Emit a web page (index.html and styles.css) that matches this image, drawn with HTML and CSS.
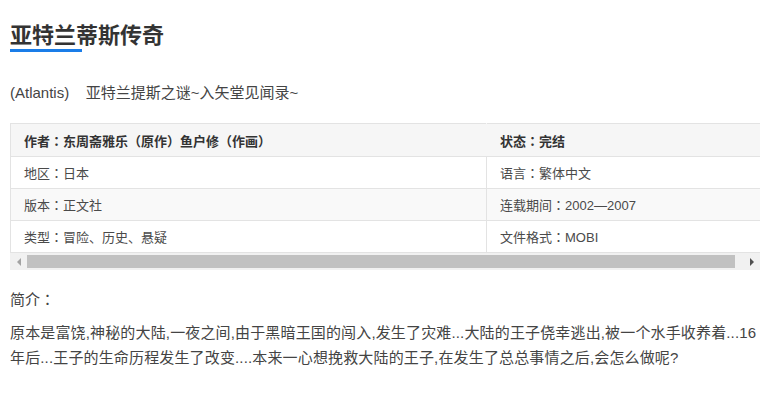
FILE: index.html
```html
<!DOCTYPE html>
<html lang="zh-CN">
<head>
<meta charset="utf-8">
<title>亚特兰蒂斯传奇</title>
<link rel="stylesheet" href="styles.css">
</head>
<body>
<main class="page">
  <h1 class="title">亚特兰蒂斯传奇</h1>
  <div class="title-bar"></div>
  <p class="subtitle">(Atlantis)&nbsp;&nbsp;&nbsp;&nbsp;亚特兰提斯之谜~入矢堂见闻录~</p>
  <div class="table-box">
    <div class="table-wrap">
      <table class="info">
        <tr class="head">
          <td class="c1">作者<span class="colon" lang="ja">：</span>东周斋雅乐（原作）鱼户修（作画）</td>
          <td class="c2">状态<span class="colon" lang="ja">：</span>完结</td>
        </tr>
        <tr>
          <td class="c1">地区<span class="colon" lang="ja">：</span>日本</td>
          <td class="c2">语言<span class="colon" lang="ja">：</span>繁体中文</td>
        </tr>
        <tr class="alt">
          <td class="c1">版本<span class="colon" lang="ja">：</span>正文社</td>
          <td class="c2">连载期间<span class="colon" lang="ja">：</span>2002—2007</td>
        </tr>
        <tr>
          <td class="c1">类型<span class="colon" lang="ja">：</span>冒险、历史、悬疑</td>
          <td class="c2">文件格式<span class="colon" lang="ja">：</span>MOBI</td>
        </tr>
      </table>
    </div>
    <div class="hscroll">
      <div class="sb-btn"><span class="arrow-left"></span></div>
      <div class="sb-track"><div class="sb-thumb"></div></div>
      <div class="sb-btn"><span class="arrow-right"></span></div>
    </div>
  </div>
  <p class="label">简介<span class="colon" lang="ja">：</span></p>
  <p class="desc">原本是富饶,神秘的大陆,一夜之间,由于黑暗王国的闯入,发生了灾难...大陆的王子侥幸逃出,被一个水手收养着...16年后...王子的生命历程发生了改变....本来一心想挽救大陆的王子,在发生了总总事情之后,会怎么做呢?</p>
</main>
</body>
</html>
```

FILE: styles.css
```css
html, body {
  margin: 0;
  padding: 0;
  background: #fff;
}
body {
  font-family: "Liberation Sans", "Noto Sans CJK SC", sans-serif;
  color: #333;
}
.page {
  width: 750px;
  padding-left: 10px;
}
.colon {
  font-family: "Noto Sans CJK JP", "Noto Sans CJK TC", sans-serif;
}
.title {
  margin: 0;
  padding-top: 23px;
  font-size: 22px;
  line-height: 26px;
  font-weight: bold;
  color: #333;
}
.title-bar {
  width: 72px;
  height: 3px;
  background: #1a7de8;
}
.subtitle {
  margin: 28px 0 0;
  font-size: 15px;
  line-height: 25px;
  color: #444;
}
.table-box {
  margin-top: 18px;
  width: 750px;
}
.table-wrap {
  width: 750px;
  overflow: hidden;
}
.info {
  width: 763px;
  border-collapse: collapse;
  font-size: 13px;
  color: #4a4a4a;
  border-left: 1px solid #e3e3e3;
  border-top: 1px solid #e3e3e3;
}
.info td {
  height: 31px;
  padding: 0 13px;
  border-bottom: 1px solid #e3e3e3;
  white-space: nowrap;
}
.info .c1 {
  width: 449px;
}
.info .c2 {
  border-left: 1px solid #e3e3e3;
}
.info .head td {
  height: 32px;
  background: #f6f6f6;
  font-weight: bold;
  color: #333;
}
.info .head .c2 {
  border-left-color: #f6f6f6;
}
.info .alt td {
  background: #f9f9f9;
}
.hscroll {
  display: flex;
  height: 17px;
  background: #f1f1f1;
}
.sb-btn {
  width: 17px;
  display: flex;
  align-items: center;
  justify-content: center;
}
.arrow-left {
  width: 0;
  height: 0;
  border-top: 4px solid transparent;
  border-bottom: 4px solid transparent;
  border-right: 4px solid #a3a3a3;
}
.arrow-right {
  width: 0;
  height: 0;
  border-top: 4px solid transparent;
  border-bottom: 4px solid transparent;
  border-left: 4px solid #505050;
}
.sb-track {
  flex: 1;
  display: flex;
  align-items: center;
}
.sb-thumb {
  width: 708px;
  height: 13px;
  background: #c1c1c1;
}
.label {
  margin: 16px 0 0;
  font-size: 15px;
  line-height: 25px;
  color: #444;
}
.desc {
  margin: 8px 0 0;
  font-size: 15px;
  line-height: 25px;
  letter-spacing: 0.15px;
  color: #444;
}
```
